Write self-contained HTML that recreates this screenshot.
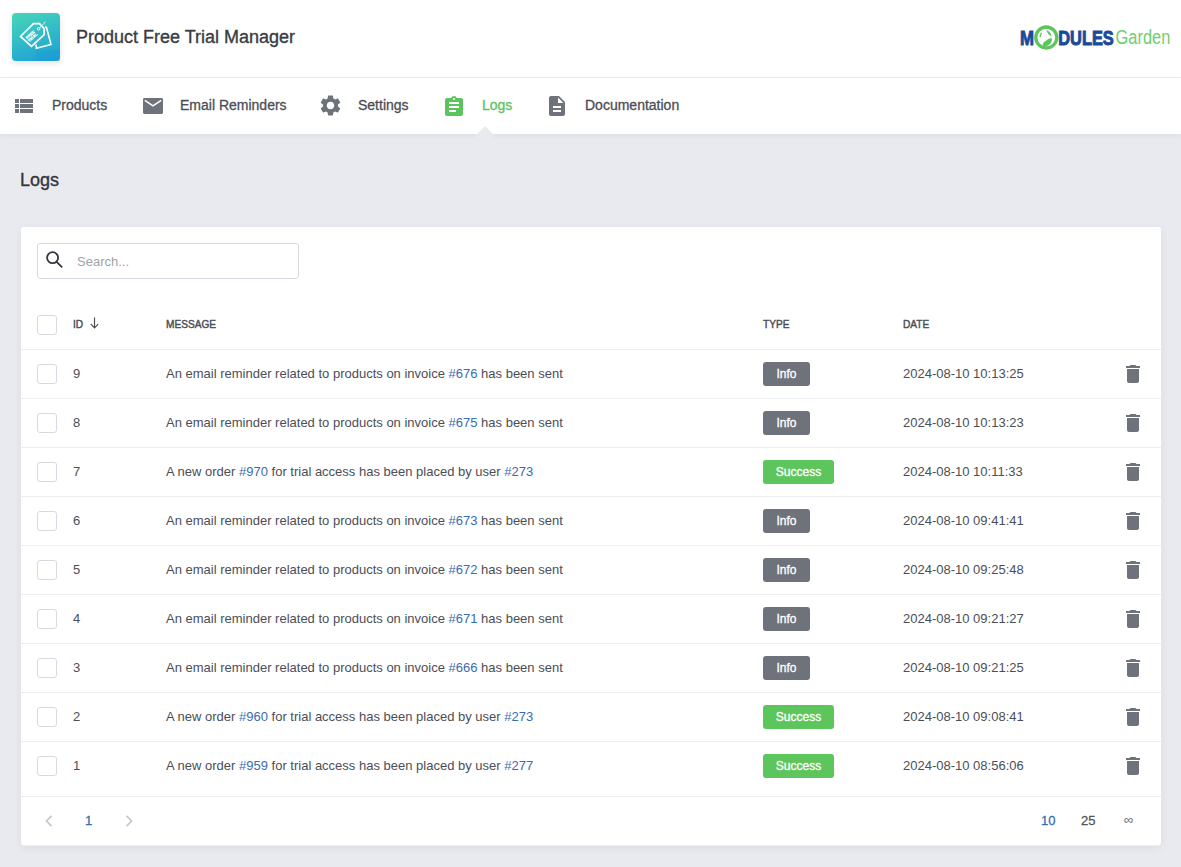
<!DOCTYPE html>
<html><head><meta charset="utf-8">
<style>
*{box-sizing:border-box;margin:0;padding:0}
html,body{width:1181px;height:867px;overflow:hidden}
body{background:#e9eaef;font-family:"Liberation Sans",sans-serif;color:#4b4e57;position:relative}
.abs{position:absolute}
#hdr{position:absolute;left:0;top:0;width:1181px;height:78px;background:#fff;border-bottom:1px solid #eceef2}
#logo{position:absolute;left:12px;top:13px;width:48px;height:48px;border-radius:4px;background:linear-gradient(160deg,#48d6b8 0%,#2fb7c9 55%,#1c9dd8 100%);box-shadow:0 2px 6px rgba(0,0,0,.12)}
#title{position:absolute;left:76px;top:27px;-webkit-text-stroke:.35px #393c44;font-size:18px;color:#393c44;white-space:nowrap;line-height:20px}
#nav{position:absolute;left:0;top:78px;width:1181px;height:56px;background:#fff;box-shadow:0 2px 6px rgba(0,0,0,.05)}
.ni{position:absolute;top:18px;-webkit-text-stroke:.3px currentColor;font-size:14px;line-height:18px;color:#4b4e57;white-space:nowrap}
.ni.act{color:#5cc45e}
.ico{position:absolute}
#arrow{position:absolute;left:478px;top:129px;width:14px;height:14px;background:#e9eaef;transform:rotate(45deg)}
#ptitle{position:absolute;left:20px;top:170px;-webkit-text-stroke:.35px #33363e;font-size:18px;line-height:20px;color:#33363e}
#card{position:absolute;left:21px;top:227px;width:1140px;height:618px;background:#fff;border-radius:3px;box-shadow:0 1px 0 #eef0f3,0 3px 9px rgba(0,0,0,.06)}
#search{position:absolute;left:16px;top:16px;width:262px;height:36px;border:1px solid #d7dae2;border-radius:3px}
#search .ph{position:absolute;left:39px;top:10px;font-size:13px;line-height:16px;color:#a0a2a9}
.cb{position:absolute;width:20px;height:20px;border:1px solid #d7dae2;border-radius:3px;background:#fff}
.th{position:absolute;font-size:11px;font-weight:normal;-webkit-text-stroke:.45px #4b4e57;color:#4b4e57;line-height:12px;top:91px;transform:scaleX(.92);transform-origin:0 0}
.row{position:absolute;left:0;width:1140px;height:49px;border-top:1px solid #eceef2}
.row .t{position:absolute;top:16px;font-size:13px;line-height:16px;white-space:nowrap}
.a{color:#3a6bb3}
.badge{position:absolute;top:12px;left:742px;height:24px;border-radius:3px;color:#fff;font-size:12px;font-weight:normal;-webkit-text-stroke:.3px #fff;line-height:24px;text-align:center}
.info{background:#6e727b;width:47px}
.succ{background:#5cc65c;width:71px}
.trash{position:absolute;left:1105px;top:15px}
#foot{position:absolute;left:0;top:569px;width:1140px;height:49px;border-top:1px solid #eceef2}
</style></head><body>
<div id="hdr">
  <div id="logo"><svg width="48" height="48" viewBox="0 0 48 48" style="position:absolute;left:0;top:0">
<rect x="24" y="37" width="24" height="11" fill="#1a9bd4" opacity=".35"/>
<path d="M8.5 23.5L21.5 10.7h6l4.7 5v6L19.5 33.3z" fill="none" stroke="#fff" stroke-width="1.7" stroke-linejoin="miter"/>
<circle cx="26.6" cy="15.8" r="1.3" fill="none" stroke="#fff" stroke-width="1"/>
<path d="M27.5 14.8c2-1 3-2.5 5.8-6.2" fill="none" stroke="#fff" stroke-width=".8"/>
<path d="M33.2 13.6l1.3 .9L39 31.5l-14.6 3.8-.4-3.8" fill="none" stroke="#fff" stroke-width="1.6"/>
<text x="0" y="0" transform="translate(19.3 23) rotate(-42)" font-family="Liberation Sans" font-weight="bold" font-size="3.8" fill="#fff" stroke="#fff" stroke-width=".25" text-anchor="middle"><tspan x="0" dy="-.3">FREE</tspan><tspan x="0" dy="3.6">TRIAL</tspan></text>
</svg></div>
  <svg class="abs" style="left:1015px;top:20px" width="160" height="35" viewBox="0 0 160 35">
<text x="5" y="24.5" font-family="Liberation Sans" font-weight="bold" font-size="19.5" fill="#1b4a9a" stroke="#1b4a9a" stroke-width=".9" textLength="14" lengthAdjust="spacingAndGlyphs">M</text>
<circle cx="31.3" cy="17.5" r="10.5" fill="#fff" stroke="#5cc65c" stroke-width="3.3"/>
<path d="M24.6 17c-.5-1.5.5-3.5 1.8-4.6l.6 1c-.8 1-1.1 2.5-1.3 3.8z" fill="#5cc65c"/>
<path d="M31.6 10.3c1.2.3 2.4 1 3.2 1.9.8.8 1.4 2 1.7 3.2l-1.3.3c-.5-.8-1.2-1.3-2-1.5.2-.8-.5-1.6-1.3-2.1z" fill="#5cc65c"/>
<path d="M27.5 25.6c.3-1.6 1-3 2.3-4 1.3-1 2.6-1.6 3.6-2.6 1-.8 2.2-1 3.4-.5.5 1.5 0 3-.8 4.3-1 1.5-2.5 2.7-4.3 3.2-1.5.3-2.9.3-4.2-.4z" fill="#5cc65c"/>
<text x="43.3" y="24.5" font-family="Liberation Sans" font-weight="bold" font-size="19.5" fill="#1b4a9a" stroke="#1b4a9a" stroke-width=".9" textLength="55.5" lengthAdjust="spacingAndGlyphs">DULES</text>
<text x="100.6" y="24.1" font-family="Liberation Sans" font-size="20.5" fill="#6fce6f" textLength="54.8" lengthAdjust="spacingAndGlyphs">Garden</text>
</svg>
  <div id="title">Product Free Trial Manager</div>
</div>
<div id="nav">
  <div class="ni" style="left:52px">Products</div>
  <div class="ni" style="left:180px">Email Reminders</div>
  <div class="ni" style="left:358px">Settings</div>
  <div class="ni act" style="left:482px">Logs</div>
  <div class="ni" style="left:585px">Documentation</div>
</div>
<svg class="ico" style="left:12px;top:94px" width="24" height="24" viewBox="0 0 24 24"><path fill="#6e727b" d="M3 14h4v-4H3v4zm0 5h4v-4H3v4zM3 9h4V5H3v4zm5 5h13v-4H8v4zm0 5h13v-4H8v4zM8 5v4h13V5H8z"/></svg>
<svg class="ico" style="left:142.5px;top:98px" width="20" height="16" viewBox="0 0 20 16"><rect width="20" height="16" rx="1.4" fill="#6e727b"/><path d="M1.8 2.3L10 7.9 18.2 2.3" stroke="#fff" stroke-width="1.5" fill="none"/></svg>
<svg class="ico" style="left:317.5px;top:93.4px" width="25" height="25" viewBox="0 0 24 24"><path fill="#6e727b" d="M19.14 12.94c.04-.3.06-.61.06-.94 0-.32-.02-.64-.07-.94l2.03-1.58c.18-.14.23-.41.12-.61l-1.920-3.32c-.12-.22-.37-.29-.59-.22l-2.39.96c-.5-.38-1.03-.7-1.62-.94l-.36-2.54c-.04-.24-.24-.41-.48-.41h-3.84c-.24 0-.43.17-.47.41l-.36 2.54c-.59.24-1.13.57-1.62.94l-2.39-.96c-.22-.08-.47 0-.59.22L2.74 8.87c-.12.21-.08.47.12.61l2.03 1.58c-.05.3-.09.63-.09.94s.02.64.07.94l-2.03 1.58c-.18.14-.23.41-.12.61l1.92 3.32c.12.22.37.29.59.22l2.39-.96c.5.38 1.03.7 1.62.94l.36 2.54c.05.24.24.41.48.41h3.84c.24 0 .44-.17.47-.41l.36-2.54c.59-.24 1.13-.56 1.62-.94l2.39.96c.22.08.47 0 .59-.22l1.92-3.32c.12-.22.07-.47-.12-.61l-2.01-1.58zM12 15.6c-1.98 0-3.6-1.62-3.6-3.6s1.62-3.6 3.6-3.6 3.6 1.62 3.6 3.6-1.620 3.6-3.6 3.6z"/></svg>
<svg class="ico" style="left:442px;top:95px" width="24" height="24" viewBox="0 0 24 24"><path fill="#5cc45e" d="M19 3h-4.18C14.4 1.84 13.3 1 12 1c-1.3 0-2.4.84-2.82 2H5c-1.1 0-2 .9-2 2v14c0 1.1.9 2 2 2h14c1.1 0 2-.9 2-2V5c0-1.1-.9-2-2-2zm-7 0c.55 0 1 .45 1 1s-.45 1-1 1-1-.45-1-1 .45-1 1-1zm2 14H7v-2h7v2zm3-4H7v-2h10v2zm0-4H7V7h10v2z"/></svg>
<svg class="ico" style="left:545px;top:94px" width="24" height="24" viewBox="0 0 24 24"><path fill="#6e727b" d="M14 2H6c-1.1 0-1.99.9-1.99 2L4 20c0 1.1.89 2 1.99 2H18c1.1 0 2-.9 2-2V8l-6-6zm2 16H8v-2h8v2zm0-4H8v-2h8v2zm-3-5V3.5L18.5 9H13z"/></svg>
<div id="arrow"></div>
<div id="ptitle">Logs</div>
<div id="card">
  <div id="search"><svg class="abs" style="left:6px;top:5px" width="24" height="24" viewBox="0 0 24 24"><circle cx="8.6" cy="8.7" r="5.5" fill="none" stroke="#33363e" stroke-width="1.8"/><path d="M12.6 12.8l5.6 5.6" stroke="#33363e" stroke-width="1.8" fill="none"/></svg><div class="ph">Search...</div></div>
  <div class="cb" style="left:16px;top:88px"></div>
  <div class="th" style="left:52px">ID</div><svg class="abs" style="left:69px;top:90px" width="9" height="12" viewBox="0 0 9 12"><path d="M4.5 0.5v10.5M0.8 7.2l3.7 3.8 3.7-3.8" fill="none" stroke="#4b4e57" stroke-width="1.2"/></svg>
  <div class="th" style="left:145px">MESSAGE</div>
  <div class="th" style="left:742px">TYPE</div>
  <div class="th" style="left:882px">DATE</div>
  <!--ROWS-->
<div class="row" style="top:122px;height:49px"><div class="cb" style="left:16px;top:14px"></div><div class="t" style="left:52px">9</div><div class="t" style="left:145px">An email reminder related to products on invoice <span class="a">#676</span> has been sent</div><div class="badge info">Info</div><div class="t" style="left:882px">2024-08-10 10:13:25</div><svg class="trash" width="14" height="18" viewBox="5 3 14 18"><path fill="#6e727b" d="M6 19c0 1.1.9 2 2 2h8c1.1 0 2-.9 2-2V7H6v12zM19 4h-3.5l-1-1h-5l-1 1H5v2h14V4z"/></svg></div>
<div class="row" style="top:171px;height:49px"><div class="cb" style="left:16px;top:14px"></div><div class="t" style="left:52px">8</div><div class="t" style="left:145px">An email reminder related to products on invoice <span class="a">#675</span> has been sent</div><div class="badge info">Info</div><div class="t" style="left:882px">2024-08-10 10:13:23</div><svg class="trash" width="14" height="18" viewBox="5 3 14 18"><path fill="#6e727b" d="M6 19c0 1.1.9 2 2 2h8c1.1 0 2-.9 2-2V7H6v12zM19 4h-3.5l-1-1h-5l-1 1H5v2h14V4z"/></svg></div>
<div class="row" style="top:220px;height:49px"><div class="cb" style="left:16px;top:14px"></div><div class="t" style="left:52px">7</div><div class="t" style="left:145px">A new order <span class="a">#970</span> for trial access has been placed by user <span class="a">#273</span></div><div class="badge succ">Success</div><div class="t" style="left:882px">2024-08-10 10:11:33</div><svg class="trash" width="14" height="18" viewBox="5 3 14 18"><path fill="#6e727b" d="M6 19c0 1.1.9 2 2 2h8c1.1 0 2-.9 2-2V7H6v12zM19 4h-3.5l-1-1h-5l-1 1H5v2h14V4z"/></svg></div>
<div class="row" style="top:269px;height:49px"><div class="cb" style="left:16px;top:14px"></div><div class="t" style="left:52px">6</div><div class="t" style="left:145px">An email reminder related to products on invoice <span class="a">#673</span> has been sent</div><div class="badge info">Info</div><div class="t" style="left:882px">2024-08-10 09:41:41</div><svg class="trash" width="14" height="18" viewBox="5 3 14 18"><path fill="#6e727b" d="M6 19c0 1.1.9 2 2 2h8c1.1 0 2-.9 2-2V7H6v12zM19 4h-3.5l-1-1h-5l-1 1H5v2h14V4z"/></svg></div>
<div class="row" style="top:318px;height:49px"><div class="cb" style="left:16px;top:14px"></div><div class="t" style="left:52px">5</div><div class="t" style="left:145px">An email reminder related to products on invoice <span class="a">#672</span> has been sent</div><div class="badge info">Info</div><div class="t" style="left:882px">2024-08-10 09:25:48</div><svg class="trash" width="14" height="18" viewBox="5 3 14 18"><path fill="#6e727b" d="M6 19c0 1.1.9 2 2 2h8c1.1 0 2-.9 2-2V7H6v12zM19 4h-3.5l-1-1h-5l-1 1H5v2h14V4z"/></svg></div>
<div class="row" style="top:367px;height:49px"><div class="cb" style="left:16px;top:14px"></div><div class="t" style="left:52px">4</div><div class="t" style="left:145px">An email reminder related to products on invoice <span class="a">#671</span> has been sent</div><div class="badge info">Info</div><div class="t" style="left:882px">2024-08-10 09:21:27</div><svg class="trash" width="14" height="18" viewBox="5 3 14 18"><path fill="#6e727b" d="M6 19c0 1.1.9 2 2 2h8c1.1 0 2-.9 2-2V7H6v12zM19 4h-3.5l-1-1h-5l-1 1H5v2h14V4z"/></svg></div>
<div class="row" style="top:416px;height:49px"><div class="cb" style="left:16px;top:14px"></div><div class="t" style="left:52px">3</div><div class="t" style="left:145px">An email reminder related to products on invoice <span class="a">#666</span> has been sent</div><div class="badge info">Info</div><div class="t" style="left:882px">2024-08-10 09:21:25</div><svg class="trash" width="14" height="18" viewBox="5 3 14 18"><path fill="#6e727b" d="M6 19c0 1.1.9 2 2 2h8c1.1 0 2-.9 2-2V7H6v12zM19 4h-3.5l-1-1h-5l-1 1H5v2h14V4z"/></svg></div>
<div class="row" style="top:465px;height:49px"><div class="cb" style="left:16px;top:14px"></div><div class="t" style="left:52px">2</div><div class="t" style="left:145px">A new order <span class="a">#960</span> for trial access has been placed by user <span class="a">#273</span></div><div class="badge succ">Success</div><div class="t" style="left:882px">2024-08-10 09:08:41</div><svg class="trash" width="14" height="18" viewBox="5 3 14 18"><path fill="#6e727b" d="M6 19c0 1.1.9 2 2 2h8c1.1 0 2-.9 2-2V7H6v12zM19 4h-3.5l-1-1h-5l-1 1H5v2h14V4z"/></svg></div>
<div class="row" style="top:514px;height:55px"><div class="cb" style="left:16px;top:14px"></div><div class="t" style="left:52px">1</div><div class="t" style="left:145px">A new order <span class="a">#959</span> for trial access has been placed by user <span class="a">#277</span></div><div class="badge succ">Success</div><div class="t" style="left:882px">2024-08-10 08:56:06</div><svg class="trash" width="14" height="18" viewBox="5 3 14 18"><path fill="#6e727b" d="M6 19c0 1.1.9 2 2 2h8c1.1 0 2-.9 2-2V7H6v12zM19 4h-3.5l-1-1h-5l-1 1H5v2h14V4z"/></svg></div>
<!--/ROWS-->
  <div id="foot">
<svg class="abs" style="left:24px;top:18px" width="8" height="12" viewBox="0 0 8 12"><path d="M6.5 0.8L1.5 6l5 5.2" fill="none" stroke="#c6c8cd" stroke-width="1.8"/></svg>
<div class="abs" style="left:64px;top:16px;font-size:13px;line-height:16px;color:#3a6bb3;-webkit-text-stroke:.3px #3a6bb3">1</div>
<svg class="abs" style="left:104px;top:18px" width="8" height="12" viewBox="0 0 8 12"><path d="M1.5 0.8L6.5 6l-5 5.2" fill="none" stroke="#c6c8cd" stroke-width="1.8"/></svg>
<div class="abs" style="left:1020px;top:16px;font-size:13px;line-height:16px;color:#3a6bb3;-webkit-text-stroke:.3px #3a6bb3">10</div>
<div class="abs" style="left:1060px;top:16px;font-size:13px;line-height:16px;color:#53565e;-webkit-text-stroke:.3px #53565e">25</div>
<div class="abs" style="left:1103px;top:15px;font-size:13px;line-height:16px;color:#63666e">&#8734;</div>
</div>
</div>
</body></html>
